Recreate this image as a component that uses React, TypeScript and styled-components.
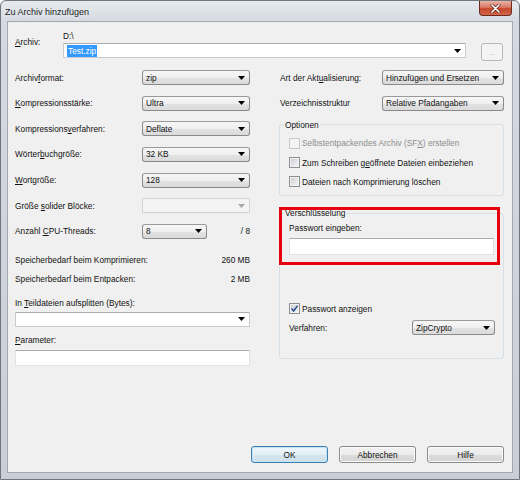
import React from "react";
import styled, { createGlobalStyle } from "styled-components";

const GlobalStyle = createGlobalStyle`
  html, body {
    margin: 0;
    padding: 0;
    background: #ffffff;
  }
  body {
    font-family: "Liberation Sans", Arial, sans-serif;
    font-size: 8.3px;
    color: #111;
  }
`;

const Window = styled.div`
  width: 520px;
  height: 480px;
  box-sizing: border-box;
  display: flex;
  flex-direction: column;
  border: 1px solid #6f767e;
  border-radius: 6px 6px 0 0;
  background: linear-gradient(180deg, #e6eaee 0px, #d4dae0 21px, #c8cfd6 100%);
  padding: 0 6px 6px 6px;
  overflow: hidden;
`;

const TitleBar = styled.div`
  height: 20px;
  margin: 0 -6px;
  display: flex;
  align-items: flex-start;
  justify-content: space-between;
`;

const Title = styled.div`
  font-size: 9px;
  line-height: 20px;
  padding: 1px 0 0 4px;
  color: #1a1a1a;
  text-shadow: 0 0 6px #ffffff;
`;

const CloseButton = styled.div`
  width: 33px;
  height: 15px;
  margin-right: 7px;
  box-sizing: border-box;
  border: 1px solid #6e2a1f;
  border-top: none;
  border-radius: 0 0 4px 4px;
  background: linear-gradient(180deg, #eab3a6 0%, #d97a64 45%, #c7462c 55%, #d2684a 100%);
  display: flex;
  align-items: center;
  justify-content: center;
`;

const Content = styled.div`
  flex: 1;
  background: #f0f0f0;
  border: 1px solid #a1a8b0;
  display: flex;
  flex-direction: column;
  padding: 7px 0 0 7px;
`;

const TopRow = styled.div`
  display: flex;
  align-items: flex-start;
`;

const ArchivLabel = styled.div`
  width: 48px;
  line-height: 10px;
  margin-top: 8px;
`;

const PathCol = styled.div`
  width: 403px;
  display: flex;
  flex-direction: column;
`;

const PathText = styled.div`
  line-height: 14px;
  height: 14px;
`;

const Selected = styled.span`
  background: #3399ff;
  color: #ffffff;
  padding: 1px 1px;
`;

const BrowseButton = styled.div`
  width: 22px;
  height: 18px;
  margin: 14px 0 0 15px;
  box-sizing: border-box;
  border: 1px solid #b5b9bd;
  border-radius: 3px;
  background: #f4f4f4;
  color: #a0a0a0;
  font-size: 7px;
  display: flex;
  align-items: center;
  justify-content: center;
`;

const Columns = styled.div`
  display: grid;
  grid-template-columns: 235px 225px;
  column-gap: 29px;
  align-items: start;
  margin-top: 9px;
`;

const Column = styled.div`
  display: flex;
  flex-direction: column;
`;

const FieldGrid = styled.div<{ $cols: string; $indent?: number }>`
  display: grid;
  grid-template-columns: ${(p) => p.$cols};
  grid-auto-rows: 15px;
  row-gap: 10.67px;
  align-items: center;
  padding-left: ${(p) => p.$indent ?? 0}px;
`;

const Label = styled.div<{ $disabled?: boolean }>`
  line-height: 12px;
  white-space: nowrap;
  color: ${(p) => (p.$disabled ? "#8e8e8e" : "#111")};
`;

type ComboKind = "list" | "edit" | "disabled";

const ComboBox = styled.div<{ $kind: ComboKind; $width?: number }>`
  width: ${(p) => (p.$width ? `${p.$width}px` : "100%")};
  height: 15px;
  box-sizing: border-box;
  display: flex;
  align-items: center;
  padding: 0 3px 0 3px;
  border: 1px solid
    ${(p) =>
      p.$kind === "list" ? "#8a8a8a" : p.$kind === "edit" ? "#c6cbd1" : "#d2d2d2"};
  border-top-color: ${(p) =>
    p.$kind === "list" ? "#9a9a9a" : p.$kind === "edit" ? "#abadb3" : "#d2d2d2"};
  border-radius: ${(p) => (p.$kind === "list" ? "3px" : "1px")};
  background: ${(p) =>
    p.$kind === "list"
      ? "linear-gradient(180deg, #f6f6f6 0%, #efefef 50%, #e3e3e3 51%, #dadada 100%)"
      : p.$kind === "edit"
        ? "#ffffff"
        : "#f4f4f4"};
`;

const ComboText = styled.div`
  flex: 1;
  line-height: 12px;
  white-space: nowrap;
  overflow: hidden;
`;

const ArrowIcon = styled.svg`
  flex: none;
  width: 7px;
  height: 4px;
  margin-right: 1px;
`;

const ThreadsCell = styled.div`
  display: flex;
  align-items: center;
  justify-content: space-between;
`;

const InfoBlock = styled.div`
  display: flex;
  flex-direction: column;
  gap: 5.5px;
  margin-top: 14px;
`;

const InfoRow = styled.div`
  display: flex;
  justify-content: space-between;
  line-height: 14px;
`;

const SmallLabel = styled.div<{ $gap: number }>`
  line-height: 14px;
  margin-top: ${(p) => p.$gap}px;
`;

const ComboSpacer = styled.div<{ $gap: number }>`
  margin-top: ${(p) => p.$gap}px;
`;

const TextField = styled.div<{ $height: number }>`
  height: ${(p) => p.$height}px;
  box-sizing: border-box;
  background: #ffffff;
  border: 1px solid #dfe3e8;
  border-top-color: #abadb3;
  border-left-color: #e2e3ea;
`;

const Group = styled.fieldset`
  margin: 0;
  padding: 0;
  min-width: 0;
  border: 1px solid #d5dfe5;
  border-radius: 3px;
`;

const GroupTitle = styled.legend`
  margin-left: 4px;
  padding: 0 1px;
  line-height: 14px;
  color: #111;
`;

const GroupBody = styled.div<{ $pad: string }>`
  padding: ${(p) => p.$pad};
  display: flex;
  flex-direction: column;
`;

const OptionsWrap = styled.div`
  margin-top: 7.3px;
`;

const CryptoWrap = styled.div`
  position: relative;
  margin-top: 10px;
`;

const Highlight = styled.div`
  position: absolute;
  top: 1px;
  left: 0;
  width: 221px;
  height: 58px;
  box-sizing: border-box;
  border: 3px solid #e8000a;
  pointer-events: none;
`;

const CheckRow = styled.div<{ $disabled?: boolean }>`
  display: flex;
  align-items: center;
  gap: 2px;
  height: 19.3px;
  color: ${(p) => (p.$disabled ? "#8e8e8e" : "#111")};
`;

const CheckBox = styled.div<{ $disabled?: boolean }>`
  width: 11px;
  height: 11px;
  box-sizing: border-box;
  flex: none;
  display: flex;
  align-items: center;
  justify-content: center;
  border: 1px solid ${(p) => (p.$disabled ? "#c8c8c8" : "#8e8f8f")};
  box-shadow: inset 0 0 0 1px ${(p) => (p.$disabled ? "#f4f4f4" : "#f2f2f2")};
  background: ${(p) =>
    p.$disabled ? "#f4f4f4" : "linear-gradient(135deg, #c9ccd1 0%, #e6e7e9 60%, #f7f7f7 100%)"};
`;

const PasswordField = styled(TextField)`
  margin-top: 4px;
`;

const ShowRow = styled(CheckRow)`
  margin-top: 44px;
`;

const MethodRow = styled.div`
  display: grid;
  grid-template-columns: 123px 83px;
  align-items: center;
  height: 15px;
  margin-top: 2px;
`;

const Footer = styled.div`
  margin-top: auto;
  display: flex;
  justify-content: flex-end;
  gap: 11px;
  padding: 0 8px 9px 0;
`;

const Button = styled.div<{ $default?: boolean }>`
  width: 77px;
  height: 17px;
  box-sizing: border-box;
  display: flex;
  align-items: center;
  justify-content: center;
  border: 1px solid ${(p) => (p.$default ? "#3c7fb1" : "#8a8a8a")};
  border-radius: 3px;
  box-shadow: inset 0 0 0 1px ${(p) => (p.$default ? "#c4e5f6" : "#fbfbfb")};
  background: ${(p) =>
    p.$default
      ? "linear-gradient(180deg, #eef6fb 0%, #e4eff6 50%, #d6e6f0 51%, #cfe0eb 100%)"
      : "linear-gradient(180deg, #f2f2f2 0%, #ebebeb 50%, #dddddd 51%, #d2d2d2 100%)"};
  color: #111;
`;

const Arrow: React.FC<{ color?: string }> = ({ color = "#000" }) => (
  <ArrowIcon viewBox="0 0 7 4">
    <polygon points="0,0 7,0 3.5,4" fill={color} />
  </ArrowIcon>
);

const Combo: React.FC<{ kind?: ComboKind; width?: number; children?: React.ReactNode }> = ({
  kind = "list",
  width,
  children,
}) => (
  <ComboBox $kind={kind} $width={width}>
    <ComboText>{children}</ComboText>
    <Arrow color={kind === "disabled" ? "#a6a6a6" : "#000"} />
  </ComboBox>
);

const Check: React.FC<{ checked?: boolean; disabled?: boolean }> = ({ checked, disabled }) => (
  <CheckBox $disabled={disabled}>
    {checked && (
      <svg width="9" height="9" viewBox="0 0 9 9">
        <path d="M1.5 4.6 L3.6 7 L7.6 1.6" fill="none" stroke="#2b4b8e" strokeWidth="1.5" />
      </svg>
    )}
  </CheckBox>
);

export default function App() {
  return (
    <>
      <GlobalStyle />
      <Window>
        <TitleBar>
          <Title>Zu Archiv hinzufügen</Title>
          <CloseButton>
            <svg width="11" height="9" viewBox="0 0 11 9">
              <path d="M2 1 L9 8 M9 1 L2 8" stroke="#5b1d12" strokeWidth="3" strokeLinecap="round" />
              <path d="M2 1 L9 8 M9 1 L2 8" stroke="#ffffff" strokeWidth="1.7" strokeLinecap="round" />
            </svg>
          </CloseButton>
        </TitleBar>
        <Content>
          <TopRow>
            <ArchivLabel>
              <u>A</u>rchiv:
            </ArchivLabel>
            <PathCol>
              <PathText>D:\</PathText>
              <Combo kind="edit">
                <Selected>Test.zip</Selected>
              </Combo>
            </PathCol>
            <BrowseButton>...</BrowseButton>
          </TopRow>

          <Columns>
            <Column>
              <FieldGrid $cols="127px 108px">
                <Label>
                  Archiv<u>f</u>ormat:
                </Label>
                <Combo>zip</Combo>
                <Label>
                  <u>K</u>ompressionsstärke:
                </Label>
                <Combo>Ultra</Combo>
                <Label>
                  Kompressions<u>v</u>erfahren:
                </Label>
                <Combo>Deflate</Combo>
                <Label>
                  Wörter<u>b</u>uchgröße:
                </Label>
                <Combo>32 KB</Combo>
                <Label>
                  <u>W</u>ortgröße:
                </Label>
                <Combo>128</Combo>
                <Label>
                  Größe <u>s</u>olider Blöcke:
                </Label>
                <Combo kind="disabled" />
                <Label>
                  Anzahl <u>C</u>PU-Threads:
                </Label>
                <ThreadsCell>
                  <Combo width={65}>8</Combo>
                  <Label>/ 8</Label>
                </ThreadsCell>
              </FieldGrid>

              <InfoBlock>
                <InfoRow>
                  <span>Speicherbedarf beim Komprimieren:</span>
                  <span>260 MB</span>
                </InfoRow>
                <InfoRow>
                  <span>Speicherbedarf beim Entpacken:</span>
                  <span>2 MB</span>
                </InfoRow>
              </InfoBlock>

              <SmallLabel $gap={9.5}>
                In <u>T</u>eildateien aufsplitten (Bytes):
              </SmallLabel>
              <ComboSpacer $gap={2}>
                <Combo kind="edit" />
              </ComboSpacer>

              <SmallLabel $gap={6}>
                <u>P</u>arameter:
              </SmallLabel>
              <ComboSpacer $gap={3}>
                <TextField $height={16} />
              </ComboSpacer>
            </Column>

            <Column>
              <FieldGrid $cols="102px 122px" $indent={1}>
                <Label>
                  Art der Akt<u>u</u>alisierung:
                </Label>
                <Combo>Hinzufügen und Ersetzen</Combo>
                <Label>Verzeichnisstruktur</Label>
                <Combo>Relative Pfadangaben</Combo>
              </FieldGrid>

              <OptionsWrap>
                <Group>
                  <GroupTitle>Optionen</GroupTitle>
                  <GroupBody $pad="1.7px 9px 3.5px 9px">
                    <CheckRow $disabled>
                      <Check disabled />
                      <span>
                        Selbstentpackendes Archiv (SF<u>X</u>) erstellen
                      </span>
                    </CheckRow>
                    <CheckRow>
                      <Check />
                      <span>
                        Zum Schreiben g<u>e</u>öffnete Dateien einbeziehen
                      </span>
                    </CheckRow>
                    <CheckRow>
                      <Check />
                      <span>Dateien nach Komprimierung löschen</span>
                    </CheckRow>
                  </GroupBody>
                </Group>
              </OptionsWrap>

              <CryptoWrap>
                <Group>
                  <GroupTitle>Verschlüsselung</GroupTitle>
                  <GroupBody $pad="2px 9px 23px 9px">
                    <Label>Passwort eingeben:</Label>
                    <PasswordField $height={17} />
                    <ShowRow>
                      <Check checked />
                      <span>Passwort anzeigen</span>
                    </ShowRow>
                    <MethodRow>
                      <Label>Verfahren:</Label>
                      <Combo>ZipCrypto</Combo>
                    </MethodRow>
                  </GroupBody>
                </Group>
                <Highlight />
              </CryptoWrap>
            </Column>
          </Columns>

          <Footer>
            <Button $default>OK</Button>
            <Button>Abbrechen</Button>
            <Button>Hilfe</Button>
          </Footer>
        </Content>
      </Window>
    </>
  );
}
